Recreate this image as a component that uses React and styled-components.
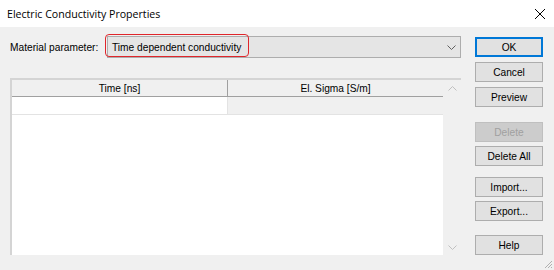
import styled, { createGlobalStyle } from 'styled-components'

const GlobalStyle = createGlobalStyle`
  html, body {
    margin: 0;
    padding: 0;
    background: #f0f0f0;
  }
  body {
    font-family: "Liberation Sans", Arial, sans-serif;
    font-size: 10.2px;
    color: #000;
  }
`

const Window = styled.div`
  width: 554px;
  height: 270px;
  display: flex;
  flex-direction: column;
  background: #f0f0f0;
  position: relative;
  overflow: hidden;
`

const TitleBar = styled.div`
  height: 27px;
  flex: none;
  background: #fff;
  display: flex;
  align-items: center;
  justify-content: space-between;
  padding: 0 9px 0 7px;
  font-family: "Open Sans", "Noto Sans", sans-serif;
  font-size: 10.6px;
  color: #000;
`

const Body = styled.div`
  flex: 1;
  display: flex;
  padding: 8px 0 0 10px;
  gap: 14px;
`

const MainColumn = styled.div`
  width: 451px;
  display: flex;
  flex-direction: column;
  gap: 20px;
`

const ComboRow = styled.div`
  display: flex;
  align-items: center;
  height: 22px;
  margin-top: 1px;
`

const Label = styled.span`
  width: 97px;
  flex: none;
  white-space: nowrap;
`

const Combo = styled.div`
  flex: 1;
  height: 20px;
  border: 1px solid #adadad;
  background: #e5e5e5;
  display: flex;
  align-items: center;
  justify-content: space-between;
  padding: 0 4px 0 4px;
  position: relative;
`

const Highlight = styled.div`
  position: absolute;
  left: -3px;
  top: -3px;
  width: 142px;
  height: 21px;
  border: 1.5px solid #e0262b;
  border-radius: 4px;
  pointer-events: none;
`

const Grid = styled.div`
  height: 175px;
  display: flex;
  border-top: 2px solid #d4d4d4;
  border-left: 2px solid #d4d4d4;
  background: #fff;
`

const GridBody = styled.div`
  flex: 1;
  display: flex;
  flex-direction: column;
`

const Row = styled.div`
  display: flex;
  height: ${({ header }) => (header ? '16px' : '17px')};
  border-bottom: 1px solid ${({ header }) => (header ? '#a0a0a0' : '#e3e3e3')};
`

const Cell = styled.div`
  flex: 1;
  display: flex;
  align-items: center;
  justify-content: center;
  background: ${({ bg }) => bg};
  border-right: 1px solid ${({ line }) => line};
  &:last-child {
    border-right: none;
  }
`

const ScrollTrack = styled.div`
  width: 18px;
  background: #f0f0f0;
  display: flex;
  flex-direction: column;
  justify-content: space-between;
  align-items: center;
  padding: 6px 0 5px;
`

const ButtonColumn = styled.div`
  width: 68px;
  display: flex;
  flex-direction: column;
  padding-top: 2px;
`

const Button = styled.div`
  height: 18px;
  margin-top: ${({ gap }) => gap}px;
  display: flex;
  align-items: center;
  justify-content: center;
  background: ${({ disabled }) => (disabled ? '#cccccc' : '#e1e1e1')};
  color: ${({ disabled }) => (disabled ? '#a0a0a0' : '#000')};
  border: 1px solid ${({ primary, disabled }) =>
    primary ? '#0078d7' : disabled ? '#bfbfbf' : '#adadad'};
  box-shadow: ${({ primary }) => (primary ? 'inset 0 0 0 1px #0078d7' : 'none')};
`

const Grip = styled.svg`
  position: absolute;
  right: 1px;
  bottom: 1px;
`

const Chevron = ({ up, color = '#606060' }) => (
  <svg width="9" height="5" viewBox="0 0 9 5">
    <path
      d={up ? 'M0.5 4.5 L4.5 0.5 L8.5 4.5' : 'M0.5 0.5 L4.5 4.5 L8.5 0.5'}
      fill="none"
      stroke={color}
      strokeWidth="1"
    />
  </svg>
)

const buttons = [
  { label: 'OK', gap: 0, primary: true },
  { label: 'Cancel', gap: 5 },
  { label: 'Preview', gap: 5 },
  { label: 'Delete', gap: 15, disabled: true },
  { label: 'Delete All', gap: 4 },
  { label: 'Import...', gap: 11 },
  { label: 'Export...', gap: 4 },
  { label: 'Help', gap: 14 },
]

export default function App() {
  return (
    <>
      <GlobalStyle />
      <Window>
        <TitleBar>
          <span>Electric Conductivity Properties</span>
          <svg width="10" height="10" viewBox="0 0 10 10">
            <path d="M0 0 L10 10 M10 0 L0 10" stroke="#000" strokeWidth="1" />
          </svg>
        </TitleBar>
        <Body>
          <MainColumn>
            <ComboRow>
              <Label>Material parameter:</Label>
              <Combo>
                <span>Time dependent conductivity</span>
                <Chevron />
                <Highlight />
              </Combo>
            </ComboRow>
            <Grid>
              <GridBody>
                <Row header>
                  <Cell bg="#f0f0f0" line="#a0a0a0">Time [ns]</Cell>
                  <Cell bg="#f0f0f0" line="#a0a0a0">El. Sigma [S/m]</Cell>
                </Row>
                <Row>
                  <Cell bg="#fff" line="#e3e3e3" />
                  <Cell bg="#f0f0f0" line="#e3e3e3" />
                </Row>
              </GridBody>
              <ScrollTrack>
                <Chevron up color="#c0c0c0" />
                <Chevron color="#c0c0c0" />
              </ScrollTrack>
            </Grid>
          </MainColumn>
          <ButtonColumn>
            {buttons.map((b) => (
              <Button key={b.label} gap={b.gap} primary={b.primary} disabled={b.disabled}>
                {b.label}
              </Button>
            ))}
          </ButtonColumn>
        </Body>
        <Grip width="10" height="10" viewBox="0 0 10 10">
          <path d="M9 2 L2 9 M9 5 L5 9 M9 8 L8 9" stroke="#b0b0b0" strokeWidth="1" />
        </Grip>
      </Window>
    </>
  )
}
